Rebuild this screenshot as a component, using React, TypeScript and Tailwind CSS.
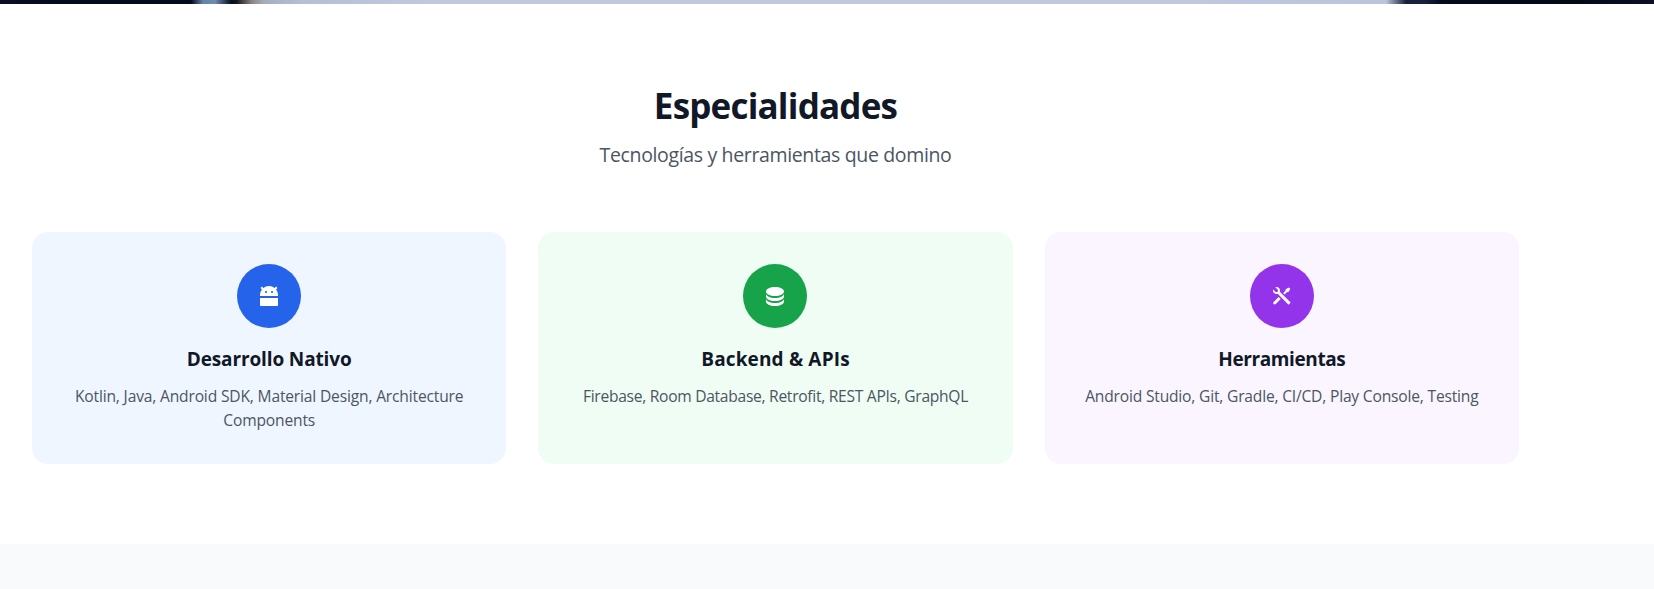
import { RiAndroidFill, RiDatabase2Fill, RiToolsFill } from "react-icons/ri";
import type { IconType } from "react-icons";

type Specialty = {
  title: string;
  text: string;
  Icon: IconType;
  card: string;
  circle: string;
  titleSpacing: string;
  textSpacing: string;
};

const specialties: Specialty[] = [
  {
    title: "Desarrollo Nativo",
    text: "Kotlin, Java, Android SDK, Material Design, Architecture Components",
    Icon: RiAndroidFill,
    card: "bg-[#eff6ff]",
    circle: "bg-[#2563eb]",
    titleSpacing: "tracking-[-0.13px]",
    textSpacing: "tracking-[-0.17px]",
  },
  {
    title: "Backend & APIs",
    text: "Firebase, Room Database, Retrofit, REST APIs, GraphQL",
    Icon: RiDatabase2Fill,
    card: "bg-[#f0fdf4]",
    circle: "bg-[#16a34a]",
    titleSpacing: "tracking-[0.15px]",
    textSpacing: "tracking-[-0.28px]",
  },
  {
    title: "Herramientas",
    text: "Android Studio, Git, Gradle, CI/CD, Play Console, Testing",
    Icon: RiToolsFill,
    card: "bg-[#faf5ff]",
    circle: "bg-[#9333ea]",
    titleSpacing: "tracking-[-0.4px]",
    textSpacing: "tracking-[-0.19px]",
  },
];

function SpecialtyCard({ title, text, Icon, card, circle, titleSpacing, textSpacing }: Specialty) {
  return (
    <article className={`rounded-2xl p-8 text-center ${card}`}>
      <div className={`mx-auto mb-4 flex size-16 items-center justify-center rounded-full ${circle}`}>
        <Icon className="mb-px size-6 text-white" />
      </div>
      <h3 className={`mb-[11px] pt-px text-[19px] leading-7 font-bold text-[#111827] ${titleSpacing}`}>{title}</h3>
      <p className={`text-[15.6px] leading-6 text-[#4b5563] ${textSpacing}`}>{text}</p>
    </article>
  );
}

export default function App() {
  return (
    <div className="min-h-[589px] overflow-hidden bg-[#f9fafb] font-['Open_Sans','Noto_Sans',sans-serif]">
      <div className="h-1 bg-[linear-gradient(to_right,#0c0e24_0px,#020a1e_60px,#020a1e_191px,#6683a8_203px,#6f8bb0_215px,#07101f_231px,#0d1220_236px,#8f8682_252px,#a5adc0_264px,#b4bfd4_300px,#c0c8de_420px,#c0c8de_1200px,#b8c5da_1386px,#17213b_1406px,#17213b_1425px,#020a1c_1442px,#020818_1570px,#0c0f26_1654px)]" />
      <section className="bg-white py-20">
        <div className="w-[1551px] px-8">
          <header className="mb-16 text-center">
            <h2 className="mb-[14px] pt-[2px] text-[35px] leading-10 font-bold tracking-[-0.8px] text-[#111827]">
              Especialidades
            </h2>
            <p className="-mb-px pt-px text-[19.5px] leading-7 tracking-[-0.35px] text-[#4b5563]">
              Tecnologías y herramientas que domino
            </p>
          </header>
          <div className="grid grid-cols-3 gap-8">
            {specialties.map((item) => (
              <SpecialtyCard key={item.title} {...item} />
            ))}
          </div>
        </div>
      </section>
    </div>
  );
}
